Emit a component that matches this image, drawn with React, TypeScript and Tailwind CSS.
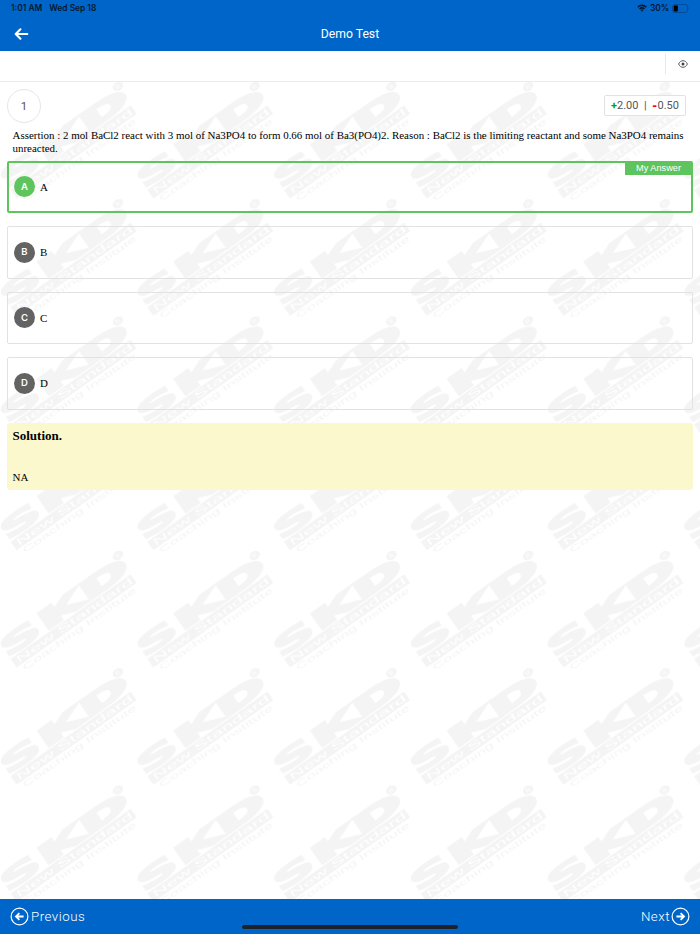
import { useState } from "react";

interface Option {
  id: string;
  label: string;
}

const OPTIONS: Option[] = [
  { id: "A", label: "A" },
  { id: "B", label: "B" },
  { id: "C", label: "C" },
  { id: "D", label: "D" },
];

const QUESTION =
  "Assertion : 2 mol BaCl2 react with 3 mol of Na3PO4 to form 0.66 mol of Ba3(PO4)2. Reason : BaCl2 is the limiting reactant and some Na3PO4 remains unreacted.";

interface LetterProps {
  x: number;
  width: number;
  weight: number;
  children: string;
}

function Letter({ x, width, weight, children }: LetterProps) {
  return (
    <text
      x={x}
      y={96.4}
      textLength={width}
      lengthAdjust="spacingAndGlyphs"
      fontSize="26"
      stroke="#f4f4f4"
      strokeWidth={weight}
      className="font-['DejaVu_Sans'] font-bold"
    >
      {children}
    </text>
  );
}

/** Institute logo, tiled behind the question */
function Watermark() {
  return (
    <svg className="absolute inset-0 h-full w-full" aria-hidden="true">
      <defs>
        <pattern id="skd" width="136.7" height="117.25" patternUnits="userSpaceOnUse">
          <g transform="translate(-6.7 -0.6) rotate(-35.2)" fill="#f4f4f4">
            <Letter x={-50.5} width={44} weight={1.9}>S</Letter>
            <Letter x={-4} width={51} weight={2.4}>K</Letter>
            <Letter x={47} width={54} weight={2.4}>D</Letter>
            <ellipse cx="99" cy="76" rx="5.6" ry="4.2" />
            <text x="96.4" y="78.4" fontSize="6.5" fill="#fff" className="font-['Liberation_Sans']">R</text>
            <rect x="-48.5" y="98.8" width="147" height="10.4" />
            <text
              x="-44"
              y="107"
              fontSize="9.6"
              fill="#fff"
              textLength="140"
              lengthAdjust="spacingAndGlyphs"
              className="font-['Liberation_Sans']"
            >
              New Standard
            </text>
            <text
              x="-43.5"
              y="116.6"
              fontSize="8.2"
              textLength="137"
              lengthAdjust="spacingAndGlyphs"
              className="font-['Liberation_Sans']"
            >
              Coaching Institute
            </text>
          </g>
        </pattern>
      </defs>
      <rect width="100%" height="100%" fill="url(#skd)" />
    </svg>
  );
}

function StatusBar() {
  return (
    <div className="flex h-[17px] items-center justify-between pl-[11px] pr-[10px] font-['Inter',sans-serif] text-[8.4px] font-semibold text-[#04182e]">
      <div className="flex gap-[7px]">
        <span>1:01 AM</span>
        <span>Wed Sep 18</span>
      </div>
      <div className="flex items-center gap-[3px]">
        <svg width="10" height="8" viewBox="0 0 10 8" fill="none" stroke="currentColor" strokeWidth="1.6">
          <path d="M.8 3.1a6 6 0 0 1 8.4 0M2.6 5a3.5 3.5 0 0 1 4.8 0" />
          <path d="M3.6 6.1L5 7.7l1.4-1.6a2 2 0 0 0-2.8 0z" fill="currentColor" stroke="none" />
        </svg>
        <span className="tracking-[-0.1px]">30%</span>
        <svg width="18" height="9" viewBox="0 0 18 9">
          <rect x=".5" y=".5" width="15" height="8" rx="2.2" fill="none" stroke="#064a91" />
          <rect x="1.7" y="1.6" width="4.2" height="5.8" rx=".8" fill="#000" />
          <path d="M16.5 3v3c1-.4 1-2.6 0-3z" fill="#064a91" />
        </svg>
      </div>
    </div>
  );
}

function OptionCard({ option, selected, onSelect }: { option: Option; selected: boolean; onSelect: () => void }) {
  return (
    <button
      type="button"
      onClick={onSelect}
      className={`relative flex h-[52.6px] w-full items-center rounded-[2px] text-left ${
        selected ? "border-2 border-[#5ec45d] pl-[5px]" : "border border-[#e2e2e2] pl-[6px]"
      }`}
    >
      <span
        className={`flex size-[21px] items-center justify-center rounded-full font-['Inter',sans-serif] text-[9.5px] font-semibold text-white ${
          selected ? "bg-[#5ec45d]" : "bg-[#636363]"
        }`}
      >
        {option.id}
      </span>
      <span className="ml-[5px] font-['Liberation_Serif',serif] text-[10.94px]">{option.label}</span>
      {selected && (
        <span className="absolute -right-px -top-px flex h-[13px] w-[67px] items-center justify-center bg-[#5ec45d] pt-px font-['Liberation_Sans',sans-serif] text-[9.2px] text-white">
          My Answer
        </span>
      )}
    </button>
  );
}

function CircleArrow({ flip }: { flip?: boolean }) {
  return (
    <svg width="19" height="19" viewBox="0 0 19 19" fill="none" stroke="#fff" className={flip ? "rotate-180" : ""}>
      <circle cx="9.5" cy="9.5" r="8.4" strokeWidth="1.2" />
      <path d="M13.6 9.5H6M9.4 6.2L6 9.5l3.4 3.3" strokeWidth="1.8" />
    </svg>
  );
}

export default function App() {
  const [answer, setAnswer] = useState("A");

  return (
    <div className="flex h-[934px] w-[700px] flex-col overflow-hidden bg-white text-black">
      <header className="h-[51px] shrink-0 bg-[#0065c8]">
        <StatusBar />
        <div className="grid h-[34px] grid-cols-3 items-center px-[14px]">
          <button type="button" aria-label="Back">
            <svg width="15" height="12" viewBox="0 0 15 12" fill="none" stroke="#fff" strokeWidth="2.1" strokeLinecap="round" strokeLinejoin="round">
              <path d="M13.3 6H2M6.4 1.3L1.7 6l4.7 4.7" />
            </svg>
          </button>
          <h1 className="text-center font-['Roboto',sans-serif] text-[12.2px] text-white">Demo Test</h1>
        </div>
      </header>

      <div className="flex h-[30.5px] shrink-0 items-start justify-end border-b border-[#ececec] pt-[3px]">
        <button type="button" aria-label="View" className="flex h-[20px] w-[35px] items-center justify-center border-l border-[#e8e8e8] pr-px">
          <svg width="10" height="8" viewBox="0 0 10 8" fill="none" stroke="#444">
            <path d="M.6 4C1.6 1.8 3.2.7 5 .7S8.4 1.8 9.4 4C8.4 6.2 6.8 7.3 5 7.3S1.6 6.2.6 4z" strokeWidth=".9" />
            <circle cx="5" cy="4" r="1.5" fill="#444" stroke="none" />
          </svg>
        </button>
      </div>

      <main className="relative grow overflow-hidden">
        <Watermark />
        <div className="relative px-[7px] pt-[7px]">
          <div className="flex items-center justify-between pr-[7px]">
            <span className="flex size-[34px] items-center justify-center rounded-full border border-[#e6e6e6] bg-white pt-[2px] font-['Roboto',sans-serif] text-[11.5px] text-[#555]">
              1
            </span>
            <div className="flex h-[21px] w-[82px] items-center justify-center whitespace-pre rounded-[2px] border border-[#e2e2e2] bg-white pt-px font-['Roboto',sans-serif] text-[11px] text-[#555]">
              <span className="font-bold text-[#00a800]">+</span>2.00{"  |  "}
              <span className="text-[12px] font-black text-[#ff0000]">-</span>0.50
            </div>
          </div>

          <p className="mt-[6px] pl-[5.5px] font-['Liberation_Serif',serif] text-[10.94px] leading-[13.5px]">{QUESTION}</p>

          <div className="mt-[5px] flex flex-col gap-[13px]">
            {OPTIONS.map((o) => (
              <OptionCard key={o.id} option={o} selected={answer === o.id} onSelect={() => setAnswer(o.id)} />
            ))}
          </div>

          <section className="mt-[13px] h-[67.5px] rounded-[3px] bg-[#fcf8cd] pl-[5.5px] pt-[5px] font-['Liberation_Serif',serif]">
            <h2 className="text-[13px] font-bold leading-[16px]">Solution.</h2>
            <p className="mt-[27px] text-[10.94px] leading-[13px]">NA</p>
          </section>
        </div>
      </main>

      <footer className="relative flex h-[35px] shrink-0 items-center justify-between bg-[#0065c8] px-[10px] font-['Roboto',sans-serif] text-[13.3px] font-light tracking-[0.5px] text-white">
        <button type="button" className="flex items-center gap-[2px]">
          <CircleArrow />
          Previous
        </button>
        <button type="button" className="flex items-center gap-[1px]">
          Next
          <CircleArrow flip />
        </button>
        <div className="absolute bottom-[5px] left-[242px] h-[4px] w-[216px] rounded-full bg-[#1d2229]" />
      </footer>
    </div>
  );
}
